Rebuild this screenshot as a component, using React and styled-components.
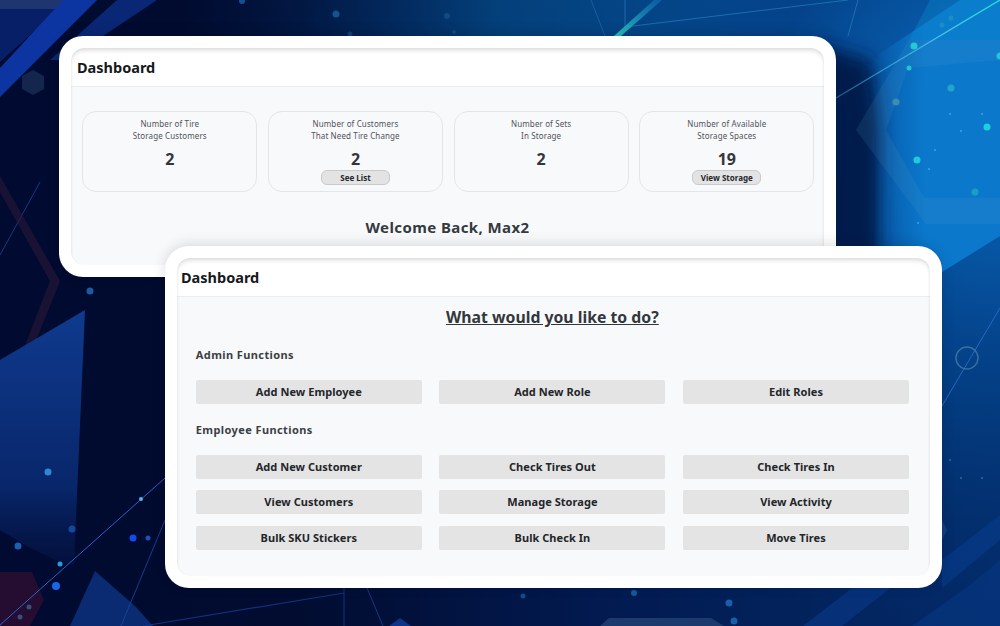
import React from "react";
import styled, { createGlobalStyle } from "styled-components";

const FONT = `"Noto Sans", "Open Sans", "Liberation Sans", sans-serif`;

const Global = createGlobalStyle`
  html, body { margin: 0; padding: 0; }
  body { font-family: ${FONT}; background: #020c30; }
`;

const Stage = styled.div`
  position: relative;
  width: 1000px;
  height: 626px;
  overflow: hidden;
`;

const Backdrop = styled.svg`
  position: absolute;
  inset: 0;
  display: block;
`;

const Frame = styled.section`
  position: absolute;
  left: ${(p) => p.$x}px;
  top: ${(p) => p.$y}px;
  width: 777px;
  height: ${(p) => p.$h}px;
  box-sizing: border-box;
  padding: 12px;
  background: #fff;
  border-radius: 24px;
  box-shadow: 0 -2px 14px rgba(0, 0, 0, 0.13);
`;

const Panel = styled.div`
  height: 100%;
  display: flex;
  flex-direction: column;
  border-radius: 13px;
  overflow: hidden;
  background: #f8f9fb;
  position: relative;
  &::after {
    content: "";
    position: absolute;
    inset: 0;
    border-radius: 13px;
    box-shadow: inset 0 4px 5px -2px rgba(0, 0, 0, 0.16), inset 2px 0 3px -2px rgba(0, 0, 0, 0.07), inset -2px 0 3px -2px rgba(0, 0, 0, 0.07);
    pointer-events: none;
  }
`;

const Header = styled.header`
  flex: none;
  height: 39px;
  box-sizing: border-box;
  padding: 8px 0 0 ${(p) => p.$inset}px;
  background: #fff;
  border-bottom: 1px solid #ecedf0;
  font-size: 14.5px;
  line-height: 22px;
  font-weight: 700;
  color: #16181b;
`;

const Stats = styled.div`
  display: grid;
  grid-template-columns: repeat(4, 175px);
  justify-content: space-between;
  padding: 24px 9.7px 0 11.3px;
`;

const StatCard = styled.div`
  height: 81px;
  box-sizing: border-box;
  padding-top: 6px;
  display: flex;
  flex-direction: column;
  align-items: center;
  border: 1px solid #e3e5e9;
  border-radius: 14px;
  color: #50545a;
`;

const StatLabel = styled.div`
  font-size: 8px;
  line-height: 12px;
  font-weight: 400;
  text-align: center;
  white-space: pre-line;
  letter-spacing: 0.12px;
`;

const StatValue = styled.div`
  margin-top: 6px;
  font-size: 16px;
  line-height: 22px;
  font-weight: 700;
  color: #33373d;
`;

const Pill = styled.button`
  width: 69px;
  height: 15px;
  margin-top: 0;
  padding: 0;
  border: 1px solid #c9cacc;
  border-radius: 6px;
  background: #e3e3e4;
  font: 700 8px/13px ${FONT};
  color: #26282b;
`;

const Welcome = styled.h2`
  margin: 24px 0 0;
  font-size: 15px;
  line-height: 22px;
  font-weight: 700;
  text-align: center;
  color: #343a40;
  letter-spacing: 0.4px;
`;

const Body = styled.div`
  padding: 9px 21px 0 18.8px;
`;

const Question = styled.h2`
  margin: 0;
  font-size: 15.8px;
  line-height: 22px;
  font-weight: 700;
  text-align: center;
  text-decoration: underline;
  color: #32373c;
`;

const SectionTitle = styled.h3`
  margin: ${(p) => p.$top}px 0 0;
  font-size: 11px;
  line-height: 16px;
  font-weight: 700;
  color: #3b3f44;
  letter-spacing: 0.4px;
`;

const ActionGrid = styled.div`
  display: grid;
  grid-template-columns: repeat(3, 226px);
  justify-content: space-between;
  row-gap: 11.5px;
  margin-top: 16.8px;
`;

const Action = styled.button`
  height: 24px;
  padding: 0;
  border: 0;
  border-radius: 2px;
  background: #e4e4e4;
  font: 700 11px/24px ${FONT};
  letter-spacing: 0.05px;
  color: #23262a;
`;

const stats = [
  { label: "Number of Tire\nStorage Customers", value: "2" },
  { label: "Number of Customers\nThat Need Tire Change", value: "2", action: "See List" },
  { label: "Number of Sets\nIn Storage", value: "2" },
  { label: "Number of Available\nStorage Spaces", value: "19", action: "View Storage" },
];

const admin = ["Add New Employee", "Add New Role", "Edit Roles"];
const employee = [
  "Add New Customer", "Check Tires Out", "Check Tires In",
  "View Customers", "Manage Storage", "View Activity",
  "Bulk SKU Stickers", "Bulk Check In", "Move Tires",
];

const dots = [
  [48, 472, 3.5, "#2f86d6"], [18, 546, 3.5, "#1d5fb0"], [72, 529, 3.5, "#15479c"],
  [60, 564, 2.5, "#1fa0dc"], [56, 586, 4, "#1767e6"], [133, 538, 3.5, "#1349ee"], [148, 538, 2.5, "#1a4fc0"],
  [90, 291, 3.5, "#1d5aa4"], [141, 499, 2, "#4fb8ee"], [29, 607, 2.5, "#37507a"], [20, 617, 2.5, "#37507a"],
  [336, 14, 3.5, "#14538f"], [242, 1, 3, "#134f92"], [350, 34, 2.5, "#0f4078"], [447, 16, 3, "#0f4a86"], [454, 32, 2, "#0f4a86"],
  [914, 46, 3.5, "#26c9d0"], [909, 68, 2.5, "#22c4d0"], [951, 88, 3.5, "#1fa6c8"], [896, 102, 3.5, "#3a8fae"],
  [987, 127, 3.5, "#1dd0dc"], [917, 160, 3.5, "#1cccdc"], [975, 192, 3.5, "#1a9fc4"], [1000, 56, 3.5, "#1dc8d8"],
  [942, 25, 2.5, "#1c8ec4"], [951, 18, 2.5, "#1c8ec4"],
  [961, 131, 1, "#3aa4dc"], [935, 150, 1, "#3aa4dc"], [929, 169, 1, "#3aa4dc"], [918, 223, 1, "#3aa4dc"], [982, 114, 1, "#3aa4dc"], [950, 114, 1, "#3aa4dc"],
  [523, 596, 2.5, "#0f4e90"], [634, 593, 3, "#145a9c"], [729, 603, 3.5, "#175fa8"], [734, 621, 3.5, "#175fa8"],
  [950, 460, 1, "#2a68a8"], [961, 478, 1, "#2a68a8"], [982, 478, 1, "#2a68a8"],
];

function Scene() {
  return (
    <Backdrop width="1000" height="626" viewBox="0 0 1000 626" aria-hidden="true">
      <defs>
        <linearGradient id="sky" x1="0" y1="0" x2="1" y2="0">
          <stop offset="0" stopColor="#010a30" />
          <stop offset="0.3" stopColor="#010c30" />
          <stop offset="0.6" stopColor="#021a50" />
          <stop offset="1" stopColor="#032a68" />
        </linearGradient>
        <radialGradient id="glowTop" gradientUnits="userSpaceOnUse" cx="800" cy="-40" r="620">
          <stop offset="0" stopColor="#0664ac" />
          <stop offset="0.5" stopColor="#04447f" stopOpacity="0.9" />
          <stop offset="1" stopColor="#02225a" stopOpacity="0" />
        </radialGradient>
        <radialGradient id="glowRight" gradientUnits="userSpaceOnUse" cx="1000" cy="120" r="520">
          <stop offset="0" stopColor="#0a6cc0" />
          <stop offset="0.45" stopColor="#04428a" />
          <stop offset="1" stopColor="#03306e" stopOpacity="0" />
        </radialGradient>
        <linearGradient id="bright" gradientUnits="userSpaceOnUse" x1="872" y1="0" x2="925" y2="0">
          <stop offset="0" stopColor="#0b78cc" stopOpacity="0" />
          <stop offset="1" stopColor="#0b78cc" />
        </linearGradient>
        <linearGradient id="shard" x1="0.5" y1="0" x2="0.5" y2="1">
          <stop offset="0" stopColor="#0f3a8e" />
          <stop offset="0.7" stopColor="#08266a" />
          <stop offset="1" stopColor="#051a52" stopOpacity="0.4" />
        </linearGradient>
        <linearGradient id="teal" x1="0" y1="1" x2="1" y2="0">
          <stop offset="0" stopColor="#22c9b8" />
          <stop offset="1" stopColor="#1a7cc8" stopOpacity="0.4" />
        </linearGradient>
        <linearGradient id="cyanLine" x1="0" y1="1" x2="1" y2="0">
          <stop offset="0" stopColor="#3aa0d8" stopOpacity="0.5" />
          <stop offset="0.7" stopColor="#4cc4e8" />
          <stop offset="1" stopColor="#1fe0d0" />
        </linearGradient>
        <filter id="soft" x="-30%" y="-30%" width="160%" height="160%">
          <feGaussianBlur stdDeviation="9" />
        </filter>
      </defs>

      <rect width="1000" height="626" fill="url(#sky)" />
      <rect width="1000" height="626" fill="url(#glowTop)" />
      <rect width="1000" height="626" fill="url(#glowRight)" />
      <polygon points="820,45 872,60 882,130 880,290 820,290" fill="#021f4e" filter="url(#soft)" />

      {/* top-left bands */}
      <polygon points="0,0 65,0 59,9 0,9" fill="#1f3570" />
      <polygon points="0,9 59,9 0,62" fill="#071f66" />
      <polygon points="0,68 63,0 97,0 0,97" fill="#0c35a2" />
      <polygon points="117,0 157,0 67,60 50,60" fill="#092775" />
      <polygon points="33,70 44,76 44,89 33,95 22,89 22,76" fill="#14264e" />
      <line x1="40" y1="182" x2="0" y2="255" stroke="#173a80" strokeWidth="1" />
      <polygon points="0,176 60,281 4,420 0,430 0,410 50,281 0,192" fill="#2a1838" opacity="0.6" />

      {/* lower-left shards */}
      <polygon points="0,360 85,310 74,565 60,562 30,548 0,530" fill="url(#shard)" />
      <polygon points="0,572 32,572 44,600 30,626 0,626" fill="#2a0e30" opacity="0.85" />
      <polygon points="95,571 135,606 153,626 70,626" fill="#0a2a72" />
      <polygon points="389,626 400,618 411,626" fill="#0c3488" />
      <polygon points="609,618 711,618 724,626 600,626" fill="#1d3a6e" />

      {/* right hexagons */}
      <polygon points="870,270 870,60 960,0 1000,0 1000,236 942,272 900,270" fill="url(#bright)" />
      <polygon points="905,0 1000,0 1000,40 909,40 930,0" fill="#0a86cc" opacity="0.4" />
      <path fillRule="evenodd" d="M856 130 L909 40 L1000 40 L1000 224 L926 224 Z M886 130 L924 198 L1000 198 L1000 60 L908 68 Z" fill="#5aa4cc" opacity="0.13" />
      <polygon points="803,626 855,586 893,586 842,626" fill="#07347f" opacity="0.8" />
      <polygon points="912,626 969,586 1000,560 1000,626 960,626" fill="#07347f" opacity="0.7" />
      <polygon points="942,560 1000,515 1000,540 942,588" fill="#073c8c" opacity="0.6" />

      {/* thin light lines */}
      <line x1="836" y1="98" x2="1000" y2="0" stroke="url(#cyanLine)" strokeWidth="1.4" />
      <line x1="625" y1="27" x2="848" y2="0" stroke="#2d88c4" strokeWidth="1" opacity="0.6" />
      <line x1="625" y1="0" x2="625" y2="27" stroke="#2a78c0" strokeWidth="1" opacity="0.7" />
      <line x1="591" y1="0" x2="605" y2="36" stroke="#2a6cb0" strokeWidth="1" opacity="0.6" />
      <polygon points="614,36 621,36 662,0 654,0" fill="url(#teal)" />
      <line x1="848" y1="36" x2="858" y2="0" stroke="#2a88c8" strokeWidth="1" opacity="0.6" />
      <line x1="1000" y1="308" x2="942" y2="406" stroke="#2c6cc8" strokeWidth="1" opacity="0.9" />
      <line x1="0" y1="625" x2="165" y2="478" stroke="#2b6be0" strokeWidth="1" opacity="0.9" />
      <line x1="121" y1="626" x2="165" y2="520" stroke="#1a4aa0" strokeWidth="1" opacity="0.8" />
      <line x1="143" y1="626" x2="344" y2="593" stroke="#143a8e" strokeWidth="1.2" opacity="0.8" />
      <line x1="344" y1="588" x2="344" y2="626" stroke="#143a8e" strokeWidth="1" opacity="0.8" />
      <line x1="367" y1="588" x2="383" y2="626" stroke="#1a4aa0" strokeWidth="1" opacity="0.7" />

      <circle cx="967" cy="358" r="11" fill="none" stroke="#4d82a8" strokeWidth="1.5" opacity="0.7" />
      <polygon points="942,520 947,530 942,540" fill="#103e80" />

      {dots.map(([x, y, r, c], i) => (
        <circle key={i} cx={x} cy={y} r={r} fill={c} />
      ))}
    </Backdrop>
  );
}

export default function App() {
  return (
    <Stage>
      <Global />
      <Scene />
      <Frame $x={59} $y={36} $h={241}>
        <Panel>
          <Header $inset={6}>Dashboard</Header>
          <Stats>
            {stats.map((s) => (
              <StatCard key={s.label}>
                <StatLabel>{s.label}</StatLabel>
                <StatValue>{s.value}</StatValue>
                {s.action && <Pill>{s.action}</Pill>}
              </StatCard>
            ))}
          </Stats>
          <Welcome>Welcome Back, Max2</Welcome>
        </Panel>
      </Frame>
      <Frame $x={165} $y={246} $h={342}>
        <Panel>
          <Header $inset={4}>Dashboard</Header>
          <Body>
            <Question>What would you like to do?</Question>
            <SectionTitle $top={19}>Admin Functions</SectionTitle>
            <ActionGrid>
              {admin.map((a) => <Action key={a}>{a}</Action>)}
            </ActionGrid>
            <SectionTitle $top={18.2}>Employee Functions</SectionTitle>
            <ActionGrid>
              {employee.map((a) => <Action key={a}>{a}</Action>)}
            </ActionGrid>
          </Body>
        </Panel>
      </Frame>
    </Stage>
  );
}
